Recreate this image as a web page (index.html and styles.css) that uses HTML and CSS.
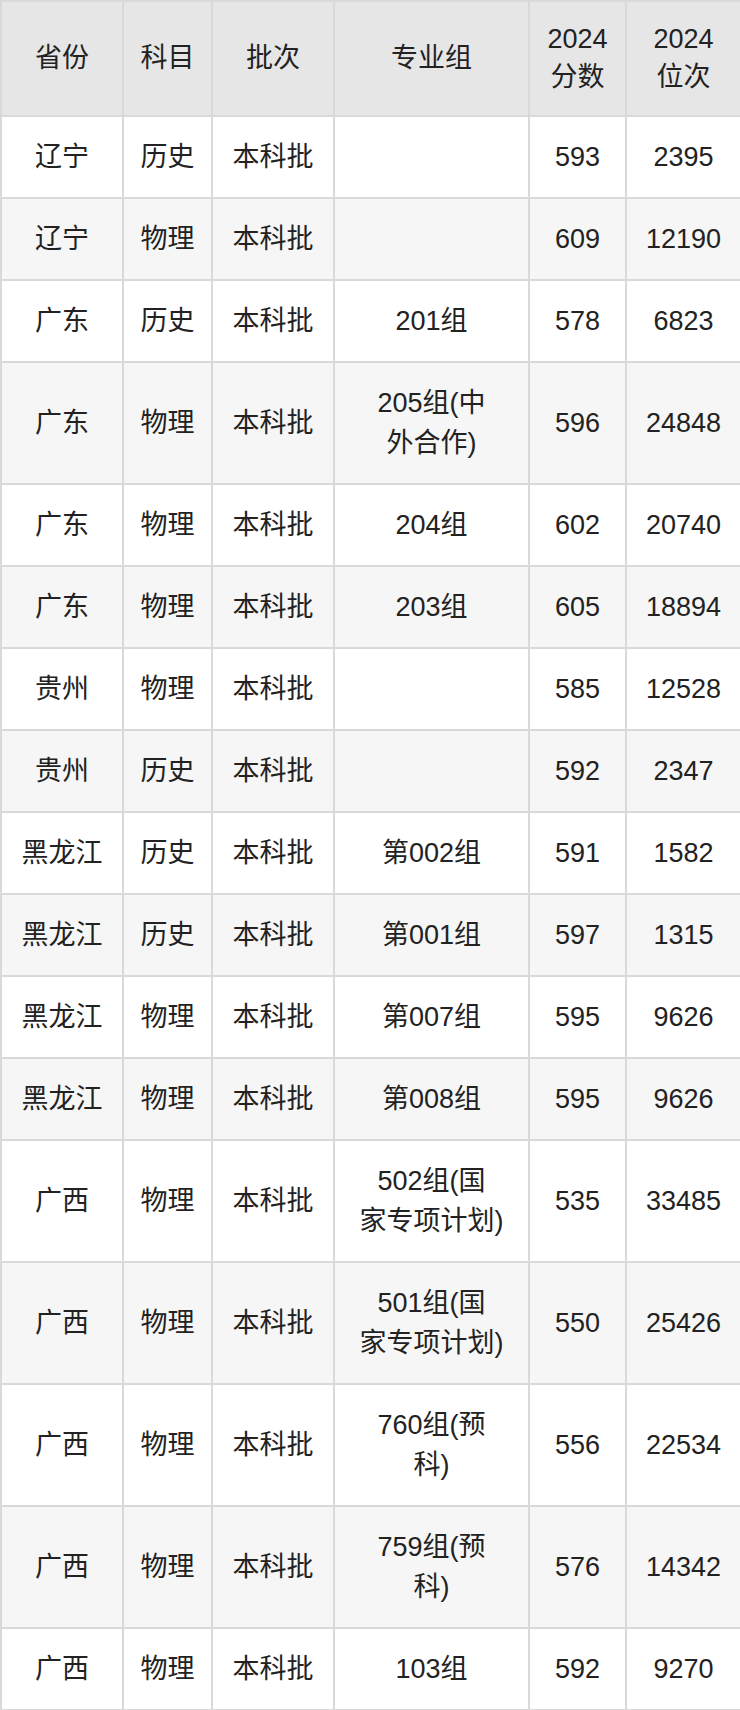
FILE: index.html
```html
<!DOCTYPE html>
<html lang="zh-CN">
<head>
<meta charset="utf-8">
<title>2024 分数位次</title>
<link rel="stylesheet" href="styles.css">
</head>
<body>
<table class="score-table">
  <colgroup>
    <col class="c-prov">
    <col class="c-subj">
    <col class="c-batch">
    <col class="c-group">
    <col class="c-score">
    <col class="c-rank">
  </colgroup>
  <thead>
    <tr>
      <th>省份</th>
      <th>科目</th>
      <th>批次</th>
      <th>专业组</th>
      <th>2024<br>分数</th>
      <th>2024<br>位次</th>
    </tr>
  </thead>
  <tbody>
    <tr><td>辽宁</td><td>历史</td><td>本科批</td><td></td><td>593</td><td>2395</td></tr>
    <tr><td>辽宁</td><td>物理</td><td>本科批</td><td></td><td>609</td><td>12190</td></tr>
    <tr><td>广东</td><td>历史</td><td>本科批</td><td>201组</td><td>578</td><td>6823</td></tr>
    <tr><td>广东</td><td>物理</td><td>本科批</td><td>205组(中<br>外合作)</td><td>596</td><td>24848</td></tr>
    <tr><td>广东</td><td>物理</td><td>本科批</td><td>204组</td><td>602</td><td>20740</td></tr>
    <tr><td>广东</td><td>物理</td><td>本科批</td><td>203组</td><td>605</td><td>18894</td></tr>
    <tr><td>贵州</td><td>物理</td><td>本科批</td><td></td><td>585</td><td>12528</td></tr>
    <tr><td>贵州</td><td>历史</td><td>本科批</td><td></td><td>592</td><td>2347</td></tr>
    <tr><td>黑龙江</td><td>历史</td><td>本科批</td><td>第002组</td><td>591</td><td>1582</td></tr>
    <tr><td>黑龙江</td><td>历史</td><td>本科批</td><td>第001组</td><td>597</td><td>1315</td></tr>
    <tr><td>黑龙江</td><td>物理</td><td>本科批</td><td>第007组</td><td>595</td><td>9626</td></tr>
    <tr><td>黑龙江</td><td>物理</td><td>本科批</td><td>第008组</td><td>595</td><td>9626</td></tr>
    <tr><td>广西</td><td>物理</td><td>本科批</td><td>502组(国<br>家专项计划)</td><td>535</td><td>33485</td></tr>
    <tr><td>广西</td><td>物理</td><td>本科批</td><td>501组(国<br>家专项计划)</td><td>550</td><td>25426</td></tr>
    <tr><td>广西</td><td>物理</td><td>本科批</td><td>760组(预<br>科)</td><td>556</td><td>22534</td></tr>
    <tr><td>广西</td><td>物理</td><td>本科批</td><td>759组(预<br>科)</td><td>576</td><td>14342</td></tr>
    <tr><td>广西</td><td>物理</td><td>本科批</td><td>103组</td><td>592</td><td>9270</td></tr>
  </tbody>
</table>
</body>
</html>
```

FILE: styles.css
```css
html, body {
  margin: 0;
  padding: 0;
  background: #ffffff;
}

body {
  font-family: "Liberation Sans", "Noto Sans CJK SC", sans-serif;
  font-size: 27px;
  color: #222222;
}

.score-table {
  width: 740px;
  border-collapse: collapse;
  table-layout: fixed;
}

.c-prov { width: 122px; }
.c-subj { width: 89px; }
.c-batch { width: 122px; }
.c-group { width: 195px; }
.c-score { width: 97px; }
.c-rank { width: 115px; }

.score-table th,
.score-table td {
  border: 2px solid #d9d9d9;
  text-align: center;
  vertical-align: middle;
  padding: 20px 0;
  line-height: 40px;
  font-weight: normal;
  white-space: nowrap;
}

.score-table th {
  background: #e6e6e6;
  line-height: 38px;
  padding: 18px 0 19px;
}

.score-table tbody tr:nth-child(even) td {
  background: #f6f6f6;
}

.score-table tbody tr:nth-child(odd) td {
  background: #ffffff;
}
```
